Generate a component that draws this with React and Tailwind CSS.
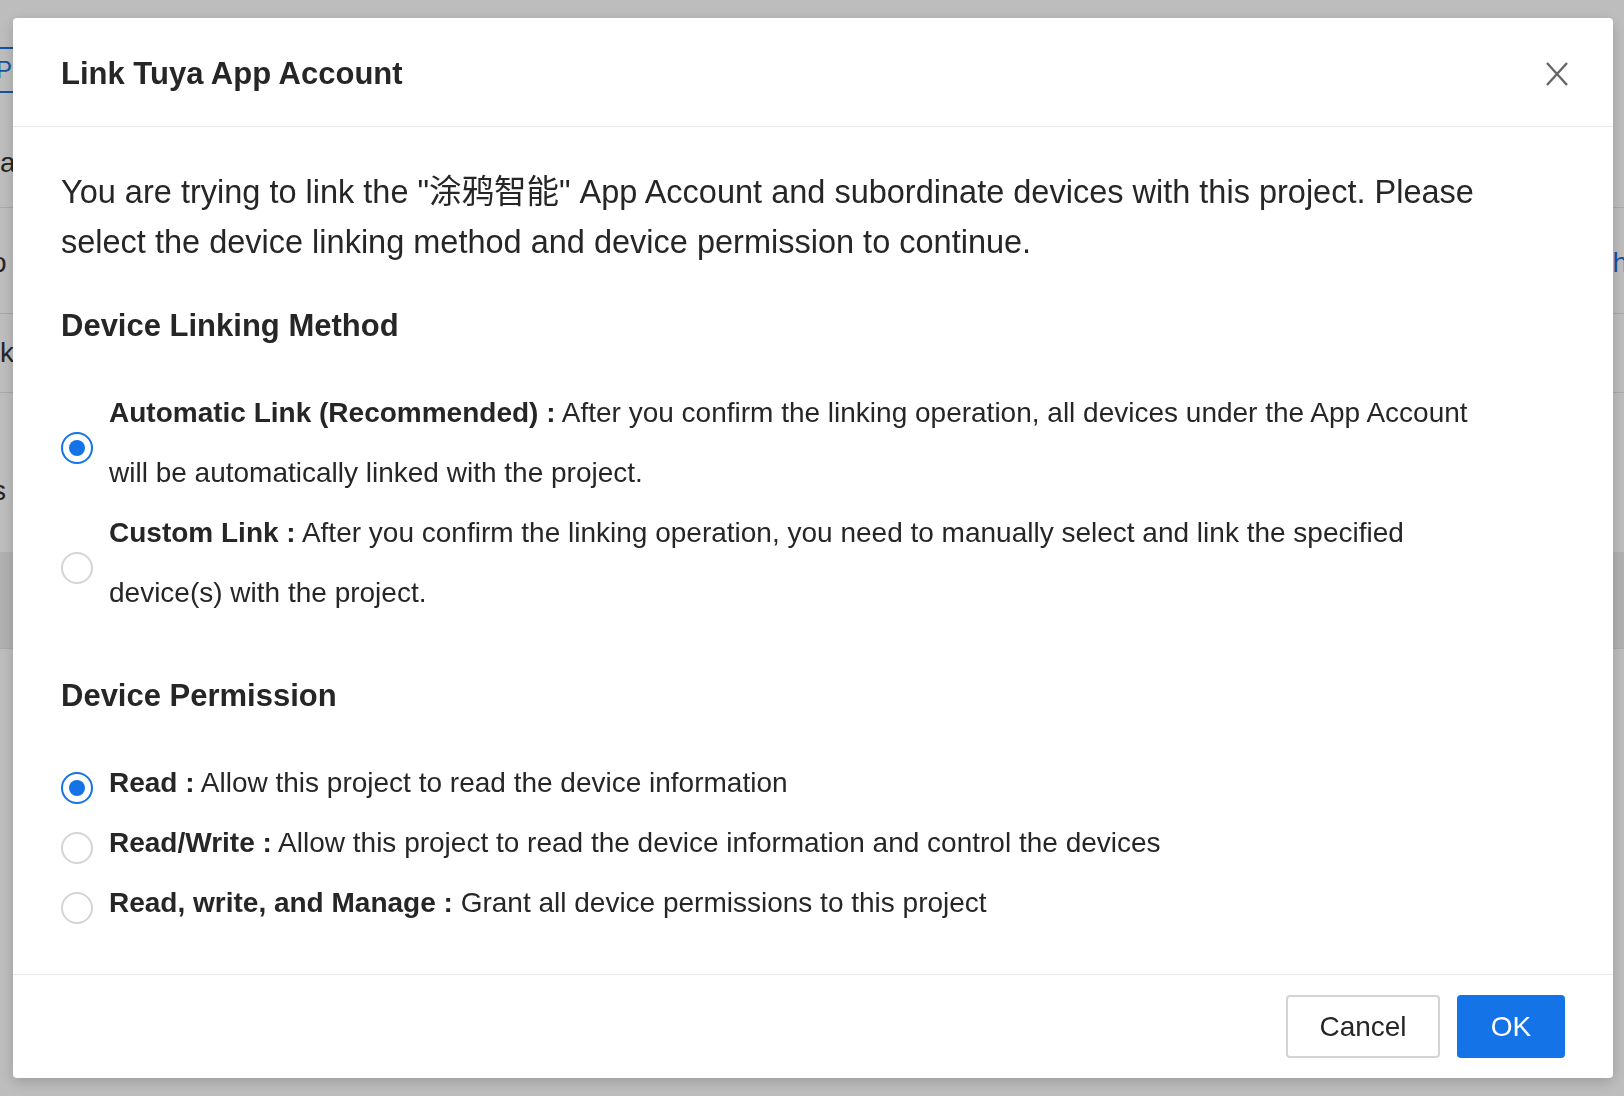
import { useState } from 'react';

const FONT = "font-['Liberation_Sans','Noto_Sans_CJK_SC',sans-serif]";

const LINK_OPTIONS = [
  {
    key: 'auto',
    title: 'Automatic Link (Recommended) :',
    desc: 'After you confirm the linking operation, all devices under the App Account will be automatically linked with the project.',
  },
  {
    key: 'custom',
    title: 'Custom Link :',
    desc: 'After you confirm the linking operation, you need to manually select and link the specified device(s) with the project.',
  },
];

const PERMISSIONS = [
  { key: 'read', title: 'Read :', desc: 'Allow this project to read the device information' },
  { key: 'rw', title: 'Read/Write :', desc: 'Allow this project to read the device information and control the devices' },
  { key: 'manage', title: 'Read, write, and Manage :', desc: 'Grant all device permissions to this project' },
];

function Radio({ checked }) {
  return (
    <span
      className={`mt-[9px] flex h-[32px] w-[32px] shrink-0 items-center justify-center rounded-full border-2 bg-white ${
        checked ? 'border-[#1473e6]' : 'border-[#d4d4d4]'
      }`}
    >
      {checked && <span className="h-[16px] w-[16px] rounded-full bg-[#1473e6]" />}
    </span>
  );
}

function Option({ option, checked, onSelect }) {
  return (
    <label className="flex cursor-pointer items-center" onClick={onSelect}>
      <Radio checked={checked} />
      <span className="ml-[16px] max-w-[1390px] text-[28px] leading-[60px] text-[#262626]">
        <span className="font-bold">{option.title}</span> {option.desc}
      </span>
    </label>
  );
}

// page behind the dialog, mostly hidden by it
function BackgroundPage() {
  return (
    <div className="flex h-full flex-col text-[28px] text-[#333]">
      <div className="h-[47px]" />
      <div className="flex h-[46px] w-[60px] items-center border-y-2 border-[#1a6fdc] text-[24px] text-[#1a6fdc]">
        <span className="-ml-[4px]">Project</span>
      </div>
      <div className="flex h-[115px] items-center border-b border-[#e4e4e4] pt-[26px]">
        <span>ame</span>
      </div>
      <div className="flex h-[106px] items-center justify-between border-b border-[#e4e4e4] pt-[4px]">
        <span className="-ml-[9px]">o</span>
        <span className="-mr-[4px] text-[#1a6fdc]">Auth</span>
      </div>
      <div className="flex h-[79px] items-center border-b border-[#e4e4e4]">
        <span>k</span>
      </div>
      <div className="flex h-[159px] items-center pt-[36px]">
        <span className="-ml-[8px]">s</span>
      </div>
      <div className="h-[97px] border-b border-[#e4e4e4] bg-[#eeeeee]" />
    </div>
  );
}

export default function App() {
  const [method, setMethod] = useState('auto');
  const [perm, setPerm] = useState('read');

  return (
    <div className={`relative h-[1096px] w-full overflow-hidden bg-white ${FONT}`}>
      <BackgroundPage />

      {/* Overlay + modal */}
      <div className="fixed inset-0 bg-black/[0.26]">
        <div className="absolute left-[13px] top-[18px] flex h-[1060px] w-[1600px] flex-col rounded-[4px] bg-white shadow-[0_4px_14px_rgba(0,0,0,0.18)]">
          {/* Header */}
          <div className="flex h-[109px] shrink-0 items-center justify-between border-b border-[#e8e8e8] pl-[48px] pr-[45px]">
            <h2 className="pt-[4px] text-[31px] font-bold text-[#262626]">Link Tuya App Account</h2>
            <button className="mt-[4px] text-[#666]">
              <svg width="22" height="24" viewBox="0 0 22 24" fill="none" stroke="currentColor" strokeWidth="2.4">
                <path d="M1 1 L21 23 M21 1 L1 23" />
              </svg>
            </button>
          </div>

          {/* Body */}
          <div className="flex-1 px-[48px] pt-[40px] text-[#262626]">
            <p className="max-w-[1450px] text-[32.5px] leading-[50px]">
              You are trying to link the "涂鸦智能" App Account and subordinate devices with this project. Please
              select the device linking method and device permission to continue.
            </p>

            <h3 className="mt-[39px] text-[31px] font-bold leading-[40px]">Device Linking Method</h3>
            <div className="mt-[37px] flex flex-col">
              {LINK_OPTIONS.map(o => (
                <Option key={o.key} option={o} checked={method === o.key} onSelect={() => setMethod(o.key)} />
              ))}
            </div>

            <h3 className="mt-[53px] text-[31px] font-bold leading-[40px]">Device Permission</h3>
            <div className="mt-[37px] flex flex-col">
              {PERMISSIONS.map(o => (
                <Option key={o.key} option={o} checked={perm === o.key} onSelect={() => setPerm(o.key)} />
              ))}
            </div>
          </div>

          {/* Footer */}
          <div className="flex shrink-0 items-center justify-end gap-[17px] border-t border-[#e8e8e8] px-[48px] pb-[20px] pt-[20px]">
            <button className="h-[63px] w-[154px] rounded-[4px] border-2 border-[#d4d4d4] bg-white text-[28px] text-[#262626]">
              Cancel
            </button>
            <button className="h-[63px] w-[108px] rounded-[4px] bg-[#1473e6] text-[28px] text-white">OK</button>
          </div>
        </div>
      </div>
    </div>
  );
}
